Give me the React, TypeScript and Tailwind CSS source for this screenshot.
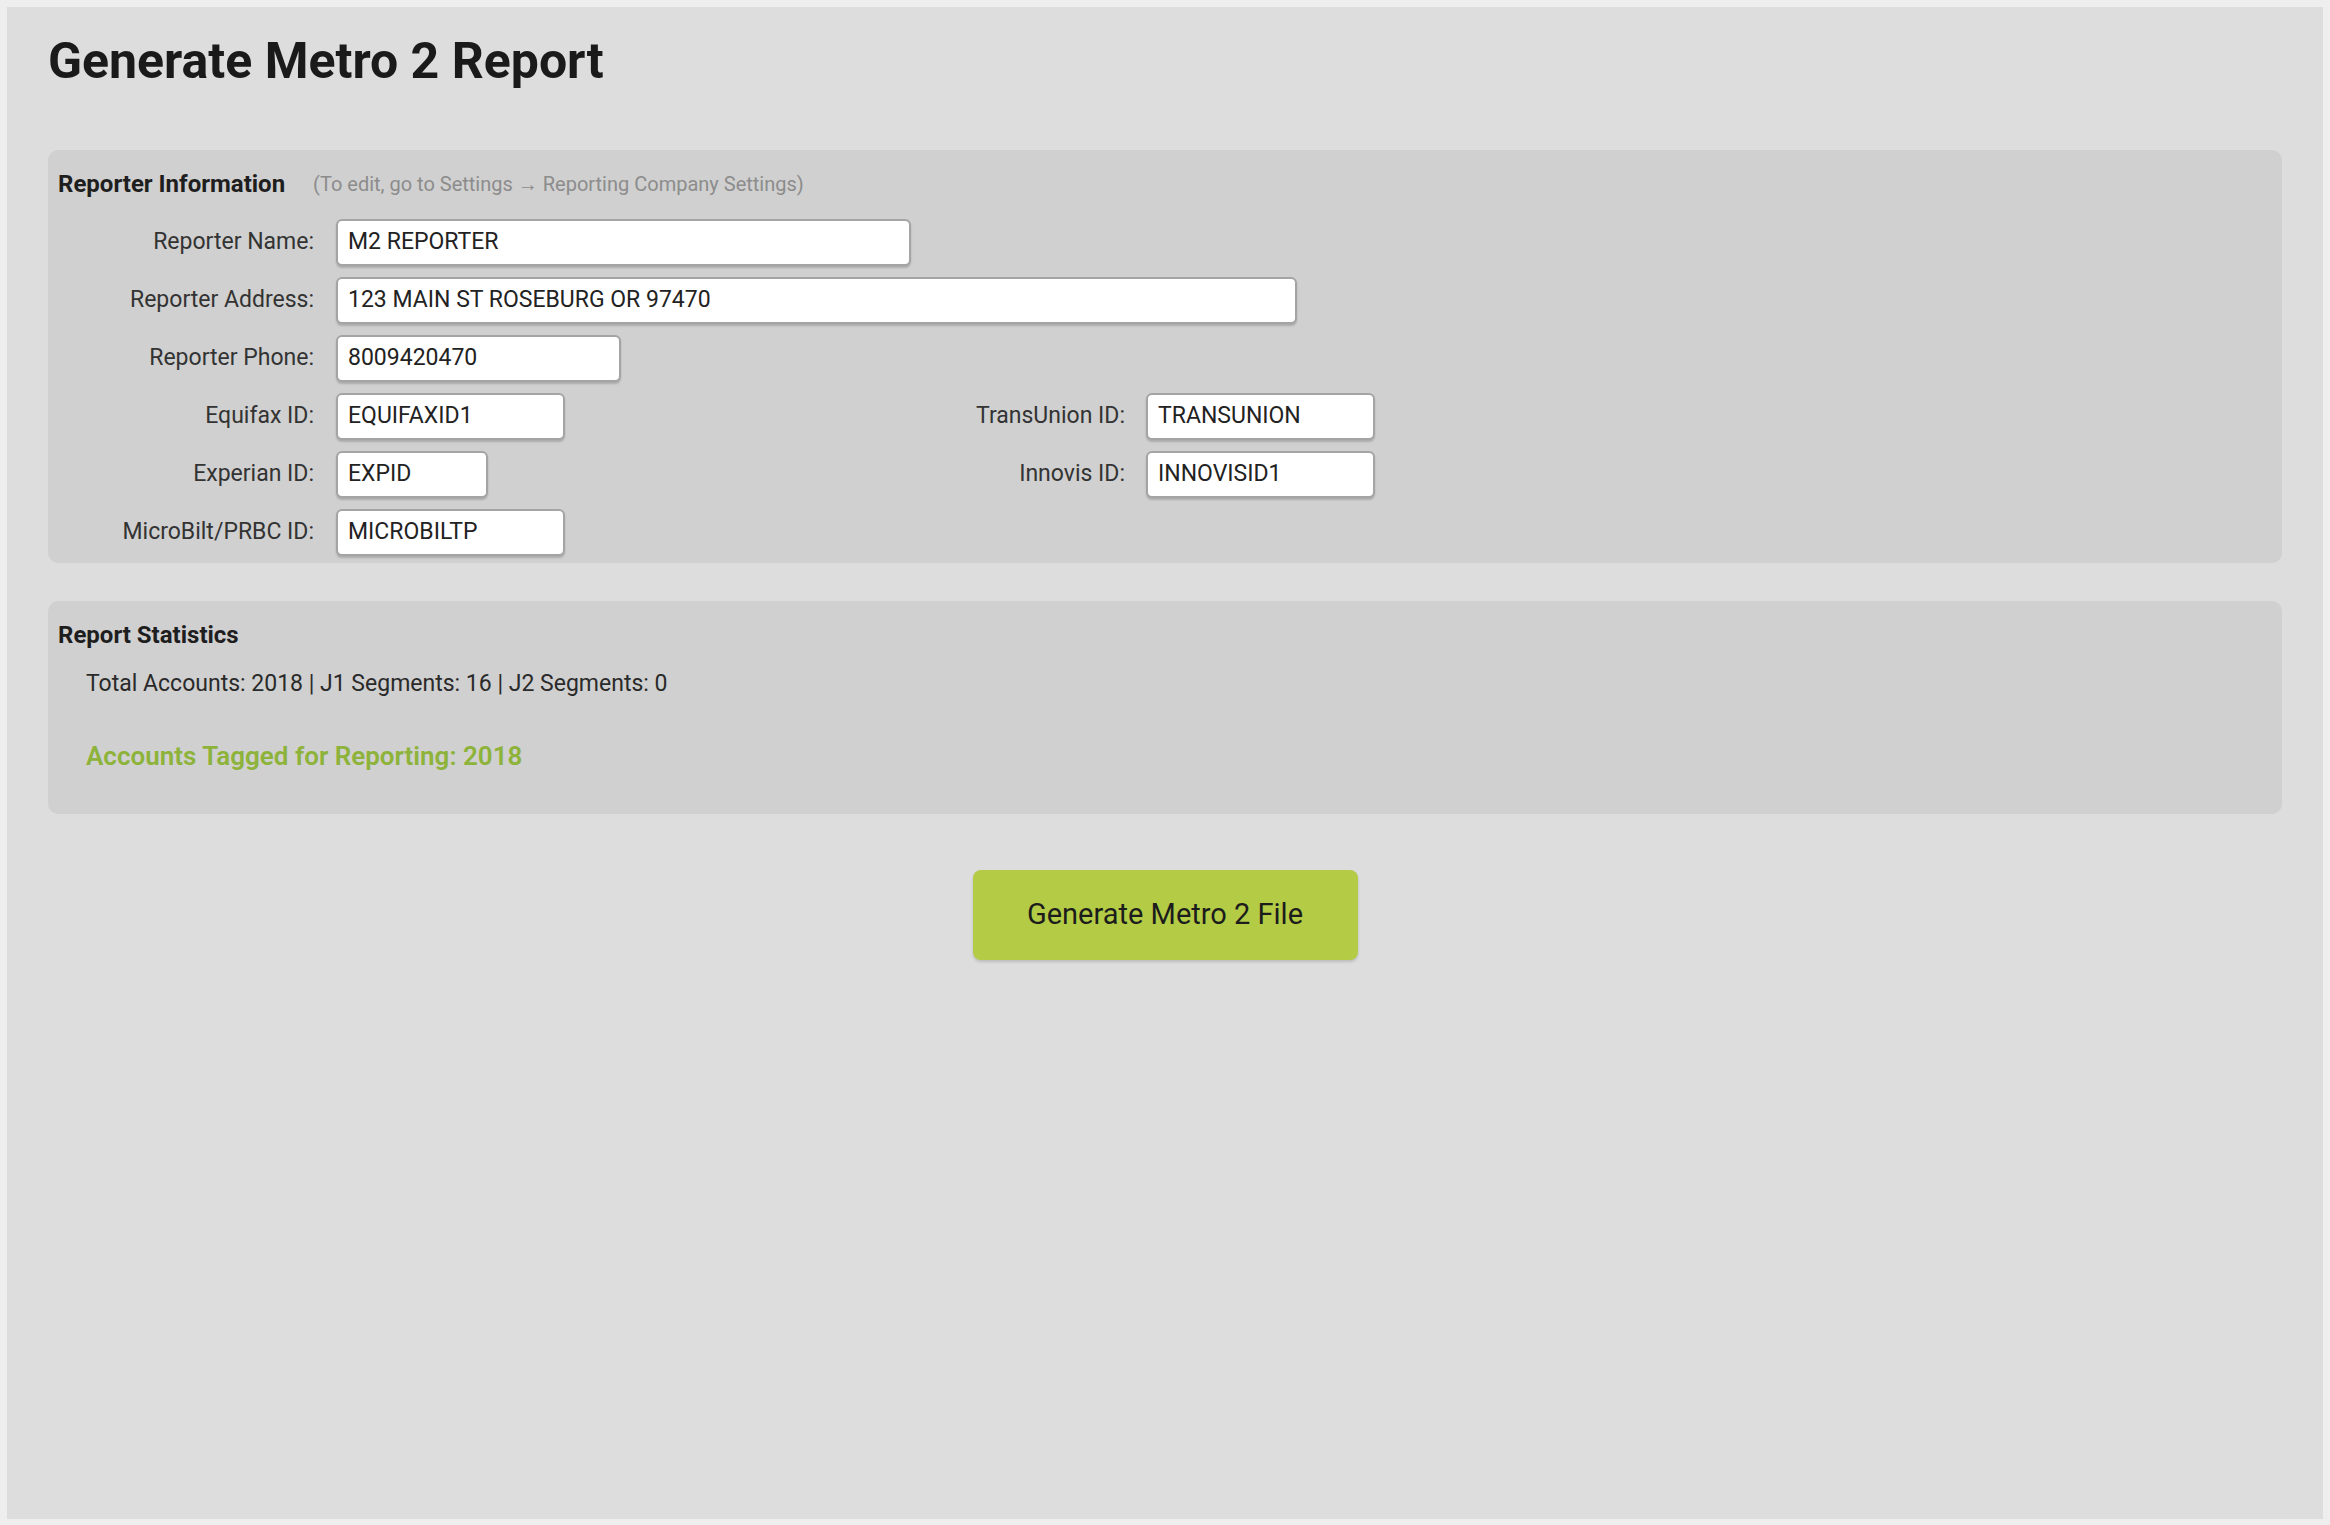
import * as React from 'react';

type FieldProps = { label: string; value: string; width: string };

const Field = ({ value, width }: { value: string; width: string }) => (
  <div
    className={`flex h-[47px] items-center rounded-[6px] border-2 border-[#a4a4a4] bg-white px-[10px] text-[23px] text-[#222] shadow-[0_2px_2px_rgba(0,0,0,0.18)] ${width}`}>
    {value}
  </div>
);

const Row = ({ label, value, width }: FieldProps) => (
  <div className="flex h-[58px] items-center">
    <div className="w-[256px] pr-0 text-right text-[23px] text-[#333]">{label}</div>
    <div className="ml-[22px]">
      <Field value={value} width={width} />
    </div>
  </div>
);

const PairRow = ({
  left,
  right,
}: {
  left: FieldProps;
  right: FieldProps;
}) => (
  <div className="flex h-[58px] items-center">
    <div className="w-[256px] text-right text-[23px] text-[#333]">{left.label}</div>
    <div className="ml-[22px] w-[589px]">
      <Field value={left.value} width={left.width} />
    </div>
    <div className="w-[200px] text-right text-[23px] text-[#333]">{right.label}</div>
    <div className="ml-[21px]">
      <Field value={right.value} width={right.width} />
    </div>
  </div>
);

export default function App() {
  return (
    <div
      className="min-h-screen bg-[#eeeeee] p-[7px]"
      style={{ fontFamily: 'Roboto, "Liberation Sans", sans-serif' }}>
      <div className="h-[1512px] bg-[#dddddd] px-[41px] pt-[24px]">
        <h1 className="text-[50px] leading-[60px] font-bold text-[#1a1a1a]">
          Generate Metro 2 Report
        </h1>

        <section className="mt-[59px] rounded-[10px] bg-[#d0d0d0] px-[10px] pt-[19px] pb-[2px]">
          <div className="flex h-[30px] items-center">
            <span className="text-[24px] font-bold text-[#1e1e1e]">Reporter Information</span>
            <span className="ml-[28px] text-[20px] text-[#8c8c8c]">
              (To edit, go to Settings → Reporting Company Settings)
            </span>
          </div>
          <div className="mt-[14px]">
            <Row label="Reporter Name:" value="M2 REPORTER" width="w-[575px]" />
            <Row label="Reporter Address:" value="123 MAIN ST ROSEBURG OR 97470" width="w-[961px]" />
            <Row label="Reporter Phone:" value="8009420470" width="w-[285px]" />
            <PairRow
              left={{ label: 'Equifax ID:', value: 'EQUIFAXID1', width: 'w-[229px]' }}
              right={{ label: 'TransUnion ID:', value: 'TRANSUNION', width: 'w-[229px]' }}
            />
            <PairRow
              left={{ label: 'Experian ID:', value: 'EXPID', width: 'w-[152px]' }}
              right={{ label: 'Innovis ID:', value: 'INNOVISID1', width: 'w-[229px]' }}
            />
            <Row label="MicroBilt/PRBC ID:" value="MICROBILTP" width="w-[229px]" />
          </div>
        </section>

        <section className="mt-[38px] h-[213px] rounded-[10px] bg-[#d0d0d0] px-[10px] pt-[19px]">
          <div className="flex h-[30px] items-center text-[24px] font-bold text-[#1e1e1e]">
            Report Statistics
          </div>
          <div className="mt-[19px] flex h-[30px] items-center pl-[28px] text-[23px] text-[#2a2a2a]">
            Total Accounts: 2018 | J1 Segments: 16 | J2 Segments: 0
          </div>
          <div className="mt-[42px] flex h-[30px] items-center pl-[28px] text-[26px] font-semibold text-[#8db33a]">
            Accounts Tagged for Reporting: 2018
          </div>
        </section>

        <div className="mt-[56px] flex justify-center">
          <button className="h-[90px] w-[385px] rounded-[8px] bg-[#b4cc45] text-[29px] text-[#1c1c1c] shadow-[0_2px_3px_rgba(0,0,0,0.15)]">
            Generate Metro 2 File
          </button>
        </div>
      </div>
    </div>
  );
}
